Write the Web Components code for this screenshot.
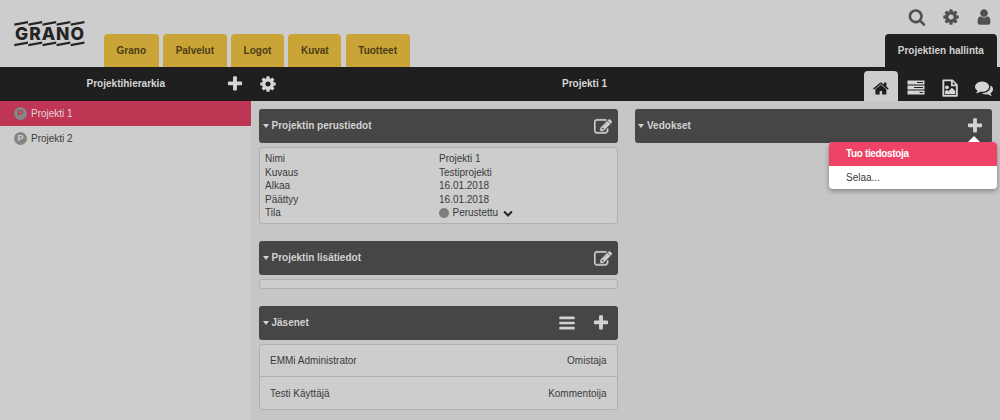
<!DOCTYPE html>
<html lang="fi">
<head>
<meta charset="utf-8">
<title>Projektien hallinta</title>
<style>
  html, body {
    height: 100%;
    margin: 0;
    overflow: hidden;
  }
  body {
    background: #cdcdcd;
    color: #3a3a3a;
    font-family: "Liberation Sans", Arial, sans-serif;
    font-size: 10px;
  }
</style>
</head>
<body>
<project-app></project-app>

<script>
const ICONS = {
  plus: '<path d="M1600 736v192q0 40-28 68t-68 28h-416v416q0 40-28 68t-68 28h-192q-40 0-68-28t-28-68v-416h-416q-40 0-68-28t-28-68v-192q0-40 28-68t68-28h416v-416q0-40 28-68t68-28h192q40 0 68 28t28 68v416h416q40 0 68 28t28 68z"/>',
  cog: '<path d="M1152 896q0-106-75-181t-181-75-181 75-75 181 75 181 181 75 181-75 75-181zm512-109v222q0 12-8 23t-20 13l-185 28q-19 54-39 91 35 50 107 138 10 12 10 25t-9 23q-27 37-99 108t-94 71q-12 0-26-9l-138-108q-44 23-91 38-16 136-29 186-7 28-36 28h-222q-14 0-24.5-8.5t-11.5-21.5l-28-184q-49-16-90-37l-141 107q-10 9-25 9-14 0-25-11-126-114-165-168-7-10-7-23 0-12 8-23 15-21 51-66.5t54-70.5q-27-50-41-99l-183-27q-13-2-21-12.5t-8-23.5v-222q0-12 8-23t19-13l186-28q14-46 39-92-40-57-107-138-10-12-10-24 0-10 9-23 26-36 98.5-107.5t94.5-71.5q13 0 26 10l138 107q44-23 91-38 16-136 29-186 7-28 36-28h222q14 0 24.5 8.5t11.5 21.5l28 184q49 16 90 37l142-107q9-9 24-9 13 0 25 10 129 119 165 170 7 8 7 22 0 12-8 23-15 21-51 66.5t-54 70.5q26 50 41 98l183 28q13 2 21 12.5t8 23.5z"/>',
  search: '<path d="M1216 832q0-185-131.5-316.5t-316.5-131.5-316.5 131.5-131.5 316.5 131.5 316.5 316.5 131.5 316.5-131.5 131.5-316.5zm512 832q0 52-38 90t-90 38q-54 0-90-38l-343-342q-179 124-399 124-143 0-273.5-55.5t-225-150-150-225-55.5-273.5 55.5-273.5 150-225 225-150 273.5-55.5 273.5 55.5 225 150 150 225 55.5 273.5q0 220-124 399l343 343q37 37 37 90z"/>',
  user: '<path d="M1536 1399q0 109-62.5 187t-150.5 78h-854q-88 0-150.5-78t-62.5-187q0-85 8.5-160.5t31.5-152 58.5-131 94-89 134.5-34.5q131 128 313 128t313-128q76 0 134.5 34.5t94 89 58.5 131 31.5 152 8.5 160.5zm-256-887q0 159-112.5 271.5t-271.5 112.5-271.5-112.5-112.5-271.5 112.5-271.5 271.5-112.5 271.5 112.5 112.5 271.5z"/>',
  home: '<path d="M1408 992v480q0 26-19 45t-45 19h-384v-384h-256v384h-384q-26 0-45-19t-19-45v-480q0-1 .5-3t.5-3l575-474 575 474q1 2 1 6zm223-69l-62 74q-8 9-21 11h-3q-13 0-21-7l-692-577-692 577q-12 8-24 7-13-2-21-11l-62-74q-8-10-7-23.5t11-21.5l719-599q32-26 76-26t76 26l244 204v-195q0-14 9-23t23-9h192q14 0 23 9t9 23v408l219 182q10 8 11 21.5t-7 23.5z"/>',
  bars: '<path d="M1664 1344v128q0 26-19 45t-45 19h-1408q-26 0-45-19t-19-45v-128q0-26 19-45t45-19h1408q26 0 45 19t19 45zm0-512v128q0 26-19 45t-45 19h-1408q-26 0-45-19t-19-45v-128q0-26 19-45t45-19h1408q26 0 45 19t19 45zm0-512v128q0 26-19 45t-45 19h-1408q-26 0-45-19t-19-45v-128q0-26 19-45t45-19h1408q26 0 45 19t19 45z"/>',
  edit: '<path d="M888 1184l116-116-152-152-116 116v56h96v96h56zm440-720q-16-16-33 1l-350 350q-17 17-1 33t33-1l350-350q17-17 1-33zm80 594v190q0 119-84.5 203.5t-203.5 84.5h-832q-119 0-203.5-84.5t-84.5-203.5v-832q0-119 84.5-203.5t203.5-84.5h832q63 0 117 25 15 7 18 23 3 17-9 29l-49 49q-14 14-32 8-23-6-45-6h-832q-66 0-113 47t-47 113v832q0 66 47 113t113 47h832q66 0 113-47t47-113v-126q0-13 9-22l64-64q15-15 35-7t20 29zm-96-738l288 288-672 672h-288v-288zm444 132l-92 92-288-288 92-92q28-28 68-28t68 28l152 152q28 28 28 68t-28 68z" stroke="currentColor" stroke-width="50"/>',
  comments: '<path d="M1408 768q0 139-94 257t-256.5 186.5-353.5 68.5q-86 0-176-16-124 88-278 128-36 9-86 16h-3q-11 0-20.5-8t-11.5-21q-1-3-1-6.5t.5-6.5 2-6l2.5-5 3.5-5.5 4-5 4.5-5 4-4.5q5-6 23-25t26-29.5 22.5-29 25-38.5 20.5-44q-124-72-195-177t-71-224q0-139 94-257t256.5-186.5 353.5-68.5 353.5 68.5 256.5 186.5 94 257zm384 256q0 120-71 224.5t-195 176.5q10 24 20.5 44t25 38.5 22.5 29 26 29.5 23 25q1 1 4 4.5t4.5 5 4 5 3.5 5.5l2.5 5 2 6 .5 6.5-1 6.5q-3 14-13 22t-22 7q-50-7-86-16-154-40-278-128-90 16-176 16-271 0-472-132 58 4 88 4 161 0 309-45t264-129q125-92 192-212t67-254q0-77-23-152 129 71 204 178t75 230z"/>',
  server: '<path fill-rule="evenodd" d="M50 150h1692v400h-1692zM1000 300v90h590v-90zM50 650h1692v400h-1692zM700 800v90h890v-90zM50 1150h1692v400h-1692zM1250 1300v90h340v-90z"/>',
  image: '<path fill-rule="evenodd" d="M220 60q-80 0-80 80v1540q0 80 80 80h1370q80 0 80-80v-1120l-500-500zM330 230h660v480h490v880h-1150zM1170 270l270 270h-270zM400 1520v-280l180-180 150 150 350-350 330 310v350z"/><circle cx="600" cy="830" r="190"/>',
  chevron: '<path d="M1683 808l-742 741q-19 19-45 19t-45-19l-742-741q-19-19-19-45.500t19-45.500l166-165q19-19 45-19t45 19l531 531 531-531q19-19 45-19t45 19l166 165q19 19 19 45.500t-19 45.500z"/>'
};

class FaIcon extends HTMLElement {
  connectedCallback() {
    this.attachShadow({ mode: 'open' });
    this.shadowRoot.innerHTML = `
      <style>
        :host { display: block; flex: none; width: 18px; height: 18px; }
        :host([name="edit"]) { margin: 2px -2px 0 0; }
        svg { display: block; width: 100%; height: 100%; fill: currentColor; }
      </style>
      <svg viewBox="0 0 1792 1792">${ICONS[this.getAttribute('name')]}</svg>
    `;
  }
}

class GranoLogo extends HTMLElement {
  connectedCallback() {
    this.attachShadow({ mode: 'open' });
    // each stripe is a parallelogram with upright ends
    const bars = [0, 1, 2, 3, 4].map(i => {
      const x = 0.3 + i * 14.1;
      return `<path d="M${x} 2.600l13.700-2.500v2.200l-13.700 2.500zM${x} 23.100l13.700-2.500v2.200l-13.700 2.500z"/>`;
    }).join('');
    this.shadowRoot.innerHTML = `
      <style>
        :host { display: block; width: 71px; height: 26px; }
        svg { display: block; }
        path, text { fill: #242424; }
        text { font: 800 17.500px Inter, "Liberation Sans", sans-serif; }
      </style>
      <svg width="71" height="26">
        ${bars}
        <text x="1" y="19.300" textLength="69">GRANO</text>
      </svg>
    `;
  }
}

class NavTab extends HTMLElement {
  connectedCallback() {
    this.attachShadow({ mode: 'open' });
    this.shadowRoot.innerHTML = `
      <style>
        :host {
          display: block;
          box-sizing: border-box;
          height: 33.500px;
          padding: 0 12.600px;
          line-height: 33px;
          border-radius: 4px 4px 0 0;
          background: #caa437;
          color: #4a3d18;
          font-weight: bold;
          white-space: nowrap;
        }
        :host([dark]) { background: #1f1f1f; color: #d2d2d2; }
      </style>
      <slot></slot>
    `;
  }
}

class TopHeader extends HTMLElement {
  connectedCallback() {
    this.attachShadow({ mode: 'open' });
    this.shadowRoot.innerHTML = `
      <style>
        :host {
          display: flex;
          box-sizing: border-box;
          height: 67px;
          padding: 0 3.500px 0 14px;
        }
        grano-logo { margin: 21px 19px 0 0; }
        nav { display: flex; align-items: flex-end; gap: 4.400px; }
        .right {
          margin-left: auto;
          display: flex;
          flex-direction: column;
          justify-content: space-between;
          align-items: flex-end;
        }
        .tools { display: flex; gap: 15.500px; padding: 8px 3.500px 0 0; color: #505050; }
      </style>
      <grano-logo></grano-logo>
      <nav>
        <nav-tab>Grano</nav-tab>
        <nav-tab>Palvelut</nav-tab>
        <nav-tab>Logot</nav-tab>
        <nav-tab>Kuvat</nav-tab>
        <nav-tab>Tuotteet</nav-tab>
      </nav>
      <div class="right">
        <div class="tools">
          <fa-icon name="search"></fa-icon>
          <fa-icon name="cog"></fa-icon>
          <fa-icon name="user"></fa-icon>
        </div>
        <nav-tab dark>Projektien hallinta</nav-tab>
      </div>
    `;
  }
}

class ProjectBar extends HTMLElement {
  connectedCallback() {
    this.attachShadow({ mode: 'open' });
    this.shadowRoot.innerHTML = `
      <style>
        :host {
          display: flex;
          height: 34px;
          background: #1f1f1f;
          color: #d6d6d6;
          font-weight: bold;
          line-height: 34px;
        }
        .side {
          display: flex;
          align-items: center;
          box-sizing: border-box;
          width: 251px;
          padding-right: 7.500px;
        }
        .side span { flex: 1; text-align: center; padding-left: 26px; }
        .main { flex: 1; display: flex; align-items: center; padding-left: 8px; }
        .title { flex: 1; text-align: center; padding-left: 28px; }
        .views { display: flex; align-self: flex-end; height: 30px; }
        .view {
          display: flex;
          align-items: center;
          justify-content: center;
          box-sizing: border-box;
          width: 34px;
          padding: 4px 0 0 1px;
        }
        .active { padding: 4px 0 0; background: #cdcdcd; color: #1f1f1f; border-radius: 4px 4px 0 0; }
        .active fa-icon { width: 17px; height: 17px; }
      </style>
      <div class="side"><span>Projektihierarkia</span><fa-icon name="plus"></fa-icon></div>
      <div class="main">
        <fa-icon name="cog"></fa-icon>
        <div class="title">Projekti 1</div>
        <div class="views">
          <div class="view active"><fa-icon name="home"></fa-icon></div>
          <div class="view"><fa-icon name="server"></fa-icon></div>
          <div class="view"><fa-icon name="image"></fa-icon></div>
          <div class="view"><fa-icon name="comments"></fa-icon></div>
        </div>
      </div>
    `;
  }
}

class TreeItem extends HTMLElement {
  connectedCallback() {
    this.attachShadow({ mode: 'open' });
    this.shadowRoot.innerHTML = `
      <style>
        :host {
          display: flex;
          align-items: center;
          gap: 4px;
          height: 25px;
          padding-left: 14px;
          --badge: #cdcdcd;
        }
        :host([selected]) { background: #be3654; color: #e4d4d8; --badge: #be3654; }
        .badge {
          width: 13px;
          height: 13px;
          border-radius: 50%;
          background: #858585;
          color: var(--badge);
          font-weight: bold;
          font-size: 9px;
          line-height: 13px;
          text-align: center;
        }
      </style>
      <span class="badge">P</span>
      <slot></slot>
    `;
  }
}

class PanelBox extends HTMLElement {
  connectedCallback() {
    this.attachShadow({ mode: 'open' });
    this.shadowRoot.innerHTML = `
      <style>
        :host { display: block; }
        header {
          display: flex;
          align-items: center;
          box-sizing: border-box;
          height: 33.500px;
          padding: 0 8px 0 3.500px;
          border-radius: 3px;
          background: #464646;
          color: #d2d2d2;
          font-weight: bold;
        }
        .caret {
          border: 3.500px solid transparent;
          border-top: 4px solid #d2d2d2;
          border-bottom: 0;
          margin-right: 3px;
        }
        .actions { display: flex; gap: 16px; margin-left: auto; }
        .body {
          box-sizing: border-box;
          margin-top: 4.500px;
          border: 1px solid #b0b0b0;
          border-radius: 3px;
          background: #cdcdcd;
          min-height: 10px;
        }
        :host([bare]) .body { display: none; }
      </style>
      <header>
        <i class="caret"></i>${this.getAttribute('heading')}
        <div class="actions"><slot name="actions"></slot></div>
      </header>
      <div class="body"><slot></slot></div>
    `;
  }
}

class DetailList extends HTMLElement {
  connectedCallback() {
    this.attachShadow({ mode: 'open' });
    this.shadowRoot.innerHTML = `
      <style>
        :host {
          display: grid;
          grid-template-columns: 174px 1fr;
          grid-auto-rows: 13.500px;
          line-height: 13.500px;
          padding: 4px 5px 3.500px;
        }
        .status { display: flex; align-items: center; }
        .dot { width: 10px; height: 10px; margin-right: 3.500px; border-radius: 50%; background: #7e7e7e; }
        fa-icon { width: 10px; height: 10px; margin-left: 5px; color: #262626; }
      </style>
      <span>Nimi</span><span>Projekti 1</span>
      <span>Kuvaus</span><span>Testiprojekti</span>
      <span>Alkaa</span><span>16.01.2018</span>
      <span>Päättyy</span><span>16.01.2018</span>
      <span>Tila</span>
      <span class="status"><i class="dot"></i>Perustettu<fa-icon name="chevron"></fa-icon></span>
    `;
  }
}

class MemberRow extends HTMLElement {
  connectedCallback() {
    this.attachShadow({ mode: 'open' });
    this.shadowRoot.innerHTML = `
      <style>
        :host {
          display: flex;
          align-items: center;
          justify-content: space-between;
          box-sizing: border-box;
          height: 31px;
          padding: 0 10px;
        }
        :host(:last-child) { height: 33px; border-top: 1px solid #b0b0b0; }
      </style>
      <slot></slot><span>${this.getAttribute('role-name')}</span>
    `;
  }
}

class DropMenu extends HTMLElement {
  connectedCallback() {
    this.attachShadow({ mode: 'open' });
    this.shadowRoot.innerHTML = `
      <style>
        :host {
          display: block;
          width: 168px;
          border-radius: 4px;
          background: #fff;
          box-shadow: 0 2px 5px rgba(0, 0, 0, .35);
        }
        .arrow {
          position: absolute;
          top: -6px;
          right: 17px;
          border: 6.500px solid transparent;
          border-top: 0;
          border-bottom: 6px solid #fff;
        }
        .item { height: 23.500px; line-height: 23.500px; padding-left: 17px; }
        .hot {
          background: #ee4266;
          color: #fff;
          font-weight: bold;
          letter-spacing: -.35px;
          border-radius: 4px 4px 0 0;
        }
      </style>
      <i class="arrow"></i>
      <div class="item hot">Tuo tiedostoja</div>
      <div class="item">Selaa...</div>
    `;
  }
}

class ProjectApp extends HTMLElement {
  connectedCallback() {
    this.attachShadow({ mode: 'open' });
    this.shadowRoot.innerHTML = `
      <style>
        :host { display: flex; flex-direction: column; height: 420px; }
        .content { flex: 1; display: flex; min-height: 0; }
        aside { width: 251px; }
        main {
          flex: 1;
          display: grid;
          grid-template-columns: 358.500px 357.500px;
          gap: 17px;
          align-items: start;
          padding: 8px 8px 0 8.500px;
          background: #c6c6c6;
        }
        .col { display: flex; flex-direction: column; gap: 17px; position: relative; }
        drop-menu { position: absolute; top: 33px; right: -5px; }
      </style>
      <top-header></top-header>
      <project-bar></project-bar>
      <div class="content">
        <aside>
          <tree-item selected>Projekti 1</tree-item>
          <tree-item>Projekti 2</tree-item>
        </aside>
        <main>
          <div class="col">
            <panel-box heading="Projektin perustiedot">
              <fa-icon slot="actions" name="edit"></fa-icon>
              <detail-list></detail-list>
            </panel-box>
            <panel-box heading="Projektin lisätiedot">
              <fa-icon slot="actions" name="edit"></fa-icon>
            </panel-box>
            <panel-box heading="Jäsenet">
              <fa-icon slot="actions" name="bars"></fa-icon>
              <fa-icon slot="actions" name="plus"></fa-icon>
              <member-row role-name="Omistaja">EMMi Administrator</member-row>
              <member-row role-name="Kommentoija">Testi Käyttäjä</member-row>
            </panel-box>
          </div>
          <div class="col">
            <panel-box heading="Vedokset" bare>
              <fa-icon slot="actions" name="plus"></fa-icon>
            </panel-box>
            <drop-menu></drop-menu>
          </div>
        </main>
      </div>
    `;
  }
}

customElements.define('fa-icon', FaIcon);
customElements.define('grano-logo', GranoLogo);
customElements.define('nav-tab', NavTab);
customElements.define('top-header', TopHeader);
customElements.define('project-bar', ProjectBar);
customElements.define('tree-item', TreeItem);
customElements.define('panel-box', PanelBox);
customElements.define('detail-list', DetailList);
customElements.define('member-row', MemberRow);
customElements.define('drop-menu', DropMenu);
customElements.define('project-app', ProjectApp);
</script>
</body>
</html>
